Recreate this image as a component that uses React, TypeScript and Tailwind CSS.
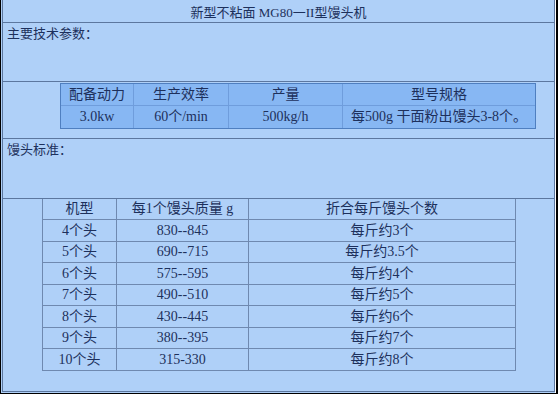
import React from "react";

const t1Head = ["配备动力", "生产效率", "产量", "型号规格"];
const t1Data = ["3.0kw", "60个/min", "500kg/h", "每500g 干面粉出馒头3-8个。"];
const t2Head = ["机型", "每1个馒头质量 g", "折合每斤馒头个数"];
const t2Rows = [
  ["4个头", "830--845", "每斤约3个"],
  ["5个头", "690--715", "每斤约3.5个"],
  ["6个头", "575--595", "每斤约4个"],
  ["7个头", "490--510", "每斤约5个"],
  ["8个头", "430--445", "每斤约6个"],
  ["9个头", "380--395", "每斤约7个"],
  ["10个头", "315-330", "每斤约8个"],
];

const t1Cols = ["w-[73px] border-r", "w-[95px] border-r", "w-[114px] border-r", "w-[192px]"];
const t2Cols = ["w-[74px]", "w-[132px]", "w-[267px]"];
const t2Heights = ["h-[22px]", "h-[21px]", "h-[22px]", "h-[21px]", "h-[22px]", "h-[21px]", "h-[22px]"];

export default function App() {
  return (
    <div className="w-[559px] h-[395px] bg-white font-['Liberation_Serif','Noto_Sans_CJK_SC',serif] text-[#1d305c]">
      <div className="w-[558px] h-[394px] border-l border-r-2 border-b border-black bg-white pr-px">
        <div className="h-full bg-[#afd0f8] pl-px pb-px">
          <div className="h-full border-l border-r border-b border-[#5c779f] flex flex-col">
            {/* title */}
            <div className="h-[23px] border-b border-[#5c779f] flex items-center justify-center text-[13px] leading-none pt-[2px]">
              新型不粘面 MG80一II型馒头机
            </div>
            {/* label 1 */}
            <div className="h-[59px] border-b border-[#5c779f] text-[13px] leading-[20px] pl-[4px] pt-[1px]">
              主要技术参数：
            </div>
            {/* table 1 row */}
            <div className="h-[57px] border-b border-[#5c779f] pl-[57px] pt-px">
              <div className="w-[476px] border border-[#4f7fc0] bg-[#87b7f3] text-[14px]">
                <div className="flex h-[22px] border-b border-[#6f9ddc]">
                  {t1Head.map((h, i) => (
                    <div key={i} className={`${t1Cols[i]} border-[#6f9ddc] flex items-center justify-center leading-none`}>
                      {h}
                    </div>
                  ))}
                </div>
                <div className="flex h-[22px]">
                  {t1Data.map((h, i) => (
                    <div key={i} className={`${t1Cols[i]} border-[#6f9ddc] flex items-center justify-center leading-none`}>
                      {h}
                    </div>
                  ))}
                </div>
              </div>
            </div>
            {/* label 2 */}
            <div className="h-[60px] border-b border-[#5c779f] text-[13px] leading-[20px] pl-[4px] pt-[1px]">
              馒头标准：
            </div>
            {/* table 2 */}
            <div className="pl-[39px]">
              <div className="w-[474px] border-l border-[#6f89b0] text-[14px]">
                <div className="flex h-[21px]">
                  {t2Head.map((h, i) => (
                    <div key={i} className={`${t2Cols[i]} border-r border-b border-[#6f89b0] flex items-center justify-center leading-none`}>
                      {h}
                    </div>
                  ))}
                </div>
                {t2Rows.map((r, ri) => (
                  <div key={ri} className={`flex ${t2Heights[ri]}`}>
                    {r.map((c, i) => (
                      <div key={i} className={`${t2Cols[i]} border-r border-b border-[#6f89b0] flex items-center justify-center leading-none`}>
                        {c}
                      </div>
                    ))}
                  </div>
                ))}
              </div>
            </div>
          </div>
        </div>
      </div>
    </div>
  );
}
